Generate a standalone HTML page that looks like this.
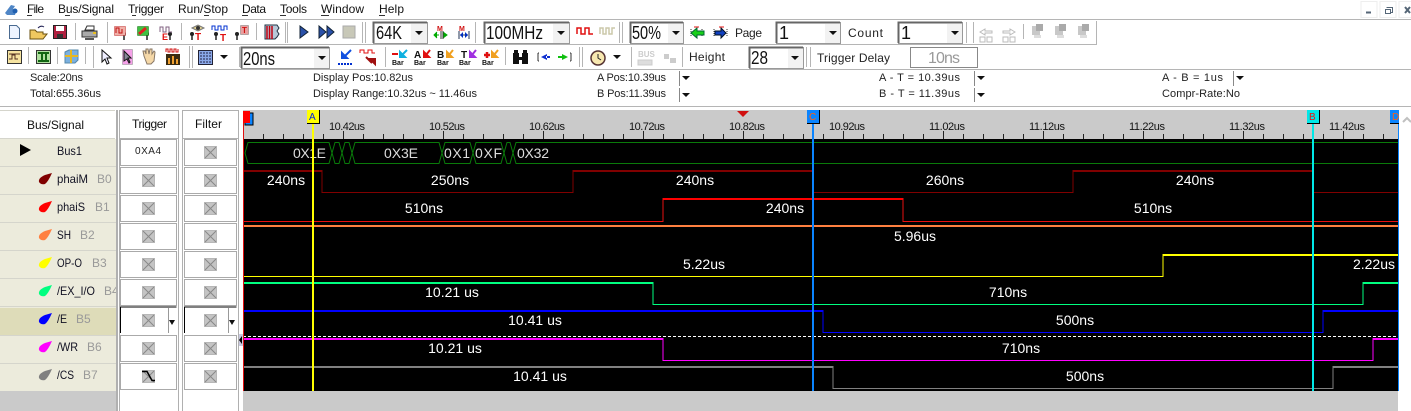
<!DOCTYPE html>
<html><head><meta charset="utf-8"><style>
html,body{margin:0;padding:0;background:#fff;width:1411px;height:411px;overflow:hidden}
svg{display:block;font-family:"Liberation Sans","IPAGothic",sans-serif}
.m{font-size:12px;fill:#111}
.i{font-size:11px;fill:#222}
.c{font-size:18px;fill:#111}
.t{font-size:12px;fill:#222}
.l{font-size:12px;fill:#112}
.g{font-size:12px;fill:#999}
.w{font-size:14px;fill:#fff;text-anchor:middle}
.b{font-size:14px;fill:#ddd}
.r{font-size:11px;fill:#111}
.k line,.k path,.k rect{shape-rendering:crispEdges}
</style></head><body>
<svg width="1411" height="411" viewBox="0 0 1411 411" xmlns="http://www.w3.org/2000/svg">
<defs>
<path id="ar" d="M-4 0h8l-4 4z" fill="#111"/>
<pattern id="tk" patternUnits="userSpaceOnUse" x="243" y="131" width="100" height="8">
<path d="M.5 0v8M20.5 3v5M40.5 3v5M60.5 3v5M80.5 3v5" stroke="#222" fill="none" shape-rendering="crispEdges"/>
</pattern>
<g id="xb"><rect width="13" height="13" fill="#c4c4c4"/><path d="M1 1l11 11M12 1L1 12" stroke="#888" fill="none"/><rect x=".5" y=".5" width="12" height="12" fill="none" stroke="#aaa" stroke-dasharray="1 1"/></g>
<g id="cell"><rect x="120.5" y=".5" width="56" height="26" fill="#fff" stroke="#aaa"/></g>
<g id="fcell"><rect x="184.5" y=".5" width="52" height="26" fill="#fff" stroke="#aaa"/></g>
<g id="bar"><text x="-8" y="10" font-size="7" font-weight="bold" fill="#111">Bar</text></g>
<g id="pc"><rect x="-6" y="-6" width="8" height="9" fill="#c8c8c8"/><rect x="-2" y="-8" width="7" height="7" fill="#aaa"/><rect x="-4" y="3" width="7" height="3" fill="#ddd"/></g>
</defs>

<!-- menu bar -->
<path d="M5 13l6-8 4 1-2 3 3 2-1 4H7z" fill="#4f86c6"/>
<circle cx="15" cy="11" r="2.5" fill="#2060b0"/>
<text class="m" x="27" y="13" textLength="17">File</text>
<text class="m" x="58" y="13" textLength="56">Bus/Signal</text>
<text class="m" x="128" y="13" textLength="36">Trigger</text>
<text class="m" x="178" y="13" textLength="50">Run/Stop</text>
<text class="m" x="242" y="13" textLength="24">Data</text>
<text class="m" x="280" y="13" textLength="27">Tools</text>
<text class="m" x="321" y="13" textLength="43">Window</text>
<text class="m" x="379" y="13" textLength="25">Help</text>
<path d="M27 15.500h5M65 15.500h5M132 15.500h4M204 15.500h5M242 15.500h6M280 15.500h6M321 15.500h8M379 15.500h6" stroke="#333" shape-rendering="crispEdges"/>

<!-- window buttons -->
<g class="k"><rect x="1361" y="1.500" width="16" height="16" fill="#fff" stroke="#eee"/><rect x="1380" y="1.500" width="16" height="16" fill="#fff" stroke="#eee"/><rect x="1399" y="1.500" width="14" height="16" fill="#fff" stroke="#eee"/>
<path d="M1366 12.500h5" stroke="#567" stroke-width="2"/><path d="M1386.500 7.500h6v5h-2M1385.500 9.500h5v4h-5z" stroke="#567" fill="none"/></g>
<path d="M1405 7l5 6M1410 7l-5 6" stroke="#567" stroke-width="2"/>

<!-- toolbar lines -->
<g class="k" stroke="#b5b5b5" fill="none">
<path d="M0 19.500H1411M0 69.500H1411M0 106.500H1411M0 44.500H1097" />
<path d="M75.500 23v17M107.500 22v21M181.500 23v17M256.500 23v17M285.500 22v21M287.500 22v21M362.500 22v21M365.500 22v21M475.500 22v21M619.500 22v21M622.500 22v21M966.500 22v21M973.500 22v21M1023.500 24v15M1096.500 21v23M28.500 47v17M57.500 47v17M85.500 47v17M93.500 46v22M189.500 46v22M192.500 46v22M239.500 47v20M385.500 47v20M505.500 47v18M579.500 47v20M582.500 47v20M631.500 47v20M682.500 47v20M806.500 47v20M810.500 47v20"/>
</g>

<!-- toolbar 1 icons -->
<path d="M9.500 25.500h7l3 3v10h-10z" fill="#eef4ff" stroke="#4a6a90"/>
<path d="M30 38v-8h5l2 2h6v2h4l-4 5H30z" fill="#f0c860" stroke="#6a5010"/><path d="M38 28q3-3 6-1" stroke="#225" fill="none"/>
<rect x="53.500" y="25.500" width="13" height="13" fill="#b02040" stroke="#222"/><rect x="56" y="26" width="8" height="5" fill="#fff"/><rect x="57" y="34" width="6" height="4" fill="#333"/>
<path d="M85 30l2-4h7v4z" fill="#fff" stroke="#333"/><path d="M82 31h15v6H82z" fill="#aaa" stroke="#333"/><rect x="85" y="38" width="9" height="2" fill="#555"/><rect x="93" y="32" width="3" height="2" fill="#e8c020"/>
<g stroke="#222" stroke-width="1.500" fill="none"><path d="M124 35v5M147 35v5M170 35v5M192 35v5M216 35v5M237 35v5" /></g>
<circle cx="124" cy="34" r="2" fill="#222"/><circle cx="147" cy="34" r="2" fill="#222"/><circle cx="170" cy="34" r="2" fill="#222"/><circle cx="192" cy="34" r="2" fill="#222"/><circle cx="216" cy="34" r="2" fill="#222"/><circle cx="237" cy="34" r="2" fill="#222"/>
<rect x="114.500" y="26.500" width="11" height="9" fill="#f0b0a8" stroke="#c03030" stroke-dasharray="1 1"/><path d="M116 33v-5h3v5h3v-4" stroke="#c01010" fill="none"/>
<rect x="137.500" y="26.500" width="11" height="9" fill="#40c040" stroke="#107010" stroke-dasharray="1 1"/><path d="M139 34l7-6" stroke="#e02020" stroke-width="3"/>
<path d="M160 32v-5h3v5h3v-5h3v5h3" stroke="#806080" fill="none"/><text x="162" y="40" font-size="9" font-weight="bold" fill="#e01010">E</text>
<path d="M192 28l6-3 6 3-6 3z" fill="#e0d090" stroke="#777"/><circle cx="198" cy="28" r="2" fill="#333"/><text x="195" y="40" font-size="10" font-weight="bold" fill="#e01010">T</text>
<path d="M212 30v-4h3v4h3v-4h3v4h3v-4h3v4" stroke="#0030d0" fill="none"/><text x="220" y="41" font-size="10" font-weight="bold" fill="#e01010">T</text>
<rect x="240.500" y="25.500" width="8" height="9" fill="#e8a0a0" stroke="#777" stroke-dasharray="1 1"/><text x="242" y="33" font-size="8" font-weight="bold" fill="#d01010">T</text>
<path d="M265 25h12l2 3-2 3 2 3-2 3-2 2h-10z" fill="#b8c8d8" stroke="#234"/><path d="M267 26v13M269.500 26v13M272 26v13" stroke="#c00010" stroke-width="1.500"/>
<path d="M300 26l8 6-8 6z" fill="#2a50a8" stroke="#123"/><path d="M319 26l7 6-7 6zM327 26l7 6-7 6z" fill="#2a50a8" stroke="#123"/>
<rect x="343" y="26" width="12" height="12" fill="#c8c8b8" stroke="#aaa"/>

<g class="k">
<rect x="373.500" y="22.500" width="54" height="21" fill="#fff" stroke="#999"/>
<rect x="411" y="24" width="16" height="19" fill="#f2f2f2"/>
<rect x="484.500" y="22.500" width="85" height="21" fill="#fff" stroke="#999"/>
<rect x="553" y="24" width="16" height="19" fill="#f2f2f2"/>
<rect x="630.500" y="22.500" width="53" height="21" fill="#fff" stroke="#999"/>
<rect x="668" y="24" width="15" height="19" fill="#f2f2f2"/>
<rect x="776.500" y="22.500" width="64" height="21" fill="#fff" stroke="#999"/>
<rect x="825" y="24" width="15" height="19" fill="#f2f2f2"/>
<rect x="898.500" y="22.500" width="64" height="21" fill="#fff" stroke="#999"/>
<rect x="947" y="24" width="15" height="19" fill="#f2f2f2"/>
<rect x="241.500" y="47.500" width="88" height="21" fill="#fff" stroke="#999"/>
<rect x="314" y="49" width="15" height="19" fill="#f2f2f2"/>
<rect x="749.500" y="47.500" width="54" height="21" fill="#fff" stroke="#999"/>
<rect x="788" y="49" width="15" height="19" fill="#f2f2f2"/>
<rect x="910.500" y="47.500" width="67" height="20" fill="#fff" stroke="#888"/>
<path d="M373.500 43V22.500H427M484.500 43V22.500H569M630.500 43V22.500H683M776.500 43V22.500H840M898.500 43V22.500H962M241.500 68V47.500H329M749.500 68V47.500H803" stroke="#666" stroke-width="2" fill="none"/>
</g>
<use href="#ar" x="419" y="31"/><use href="#ar" x="561" y="31"/><use href="#ar" x="676" y="31"/><use href="#ar" x="833" y="31"/><use href="#ar" x="955" y="31"/><use href="#ar" x="322" y="56"/><use href="#ar" x="795" y="56"/><use href="#ar" x="224" y="55"/><use href="#ar" x="617" y="55"/>
<text class="c" x="376" y="39" textLength="26" lengthAdjust="spacingAndGlyphs">64K</text>
<text class="c" x="486" y="39" textLength="57" lengthAdjust="spacingAndGlyphs">100MHz</text>
<text class="c" x="632" y="39" textLength="29" lengthAdjust="spacingAndGlyphs">50%</text>
<text class="c" x="779" y="39">1</text>
<text class="c" x="901" y="39">1</text>
<text class="c" x="243" y="65" textLength="32" lengthAdjust="spacingAndGlyphs">20ns</text>
<text class="c" x="751" y="64" textLength="17" lengthAdjust="spacingAndGlyphs">28</text>
<text x="928" y="63" font-size="16" fill="#999" textLength="32">10ns</text>

<text x="437" y="31" font-size="7" font-weight="bold" fill="#d01010">M</text><text x="459" y="31" font-size="7" font-weight="bold" fill="#d01010">M</text>
<path d="M434 35h5M437 32l-3 3 3 3M443 32l4 3-4 3" stroke="#0a0" fill="#0a0"/><path d="M441 31v8M443 31v8" stroke="#333"/>
<path d="M459 31v8M469 31v8M460 35h8" stroke="#235"/><path d="M463 32l-3 3 3 3zM465 32l3 3-3 3z" fill="#0030c0"/>
<path d="M577 34v-6h4v6h4v-6h4v6h4" stroke="#e01010" fill="none" stroke-width="1.500"/>
<path d="M600 34v-6h3v6h3v-6h3v6h3v-6h3" stroke="#ccc8aa" fill="none" stroke-width="1.500"/>
<path d="M691 29v8M702 29v8" stroke="#333" stroke-dasharray="1 1"/><path d="M697 28l-6 5 6 5v-3h7v-4h-7z" fill="#18d018" stroke="#063"/><path d="M694 27h5" stroke="#e01010"/>
<path d="M714 29v8M727 29v8" stroke="#333" stroke-dasharray="1 1"/><path d="M715 31h6v-3l5 5-5 5v-3h-6z" fill="#1040c0" stroke="#012"/><path d="M719 27h5" stroke="#e01010"/>
<text class="t" x="735" y="37" textLength="27">Page</text>
<text class="t" x="848" y="37" textLength="35">Count</text>

<!-- disabled icons -->
<path d="M980 32l5-3v2h7v2h-7v2zM980 37h5v5h-5zM987 37h5v5h-5z" fill="none" stroke="#bbb"/>
<path d="M1015 32l-5-3v2h-7v2h7v2zM1003 37h5v5h-5zM1010 37h5v5h-5z" fill="none" stroke="#bbb"/>
<use href="#pc" x="1038" y="32"/><use href="#pc" x="1061" y="32"/><use href="#pc" x="1084" y="32"/>

<!-- toolbar 2 icons -->
<g class="k"><rect x="7.500" y="50.500" width="14" height="13" fill="#f5e3a0" stroke="#333"/><rect x="36.500" y="50.500" width="14" height="13" fill="#b0e0a0" stroke="#333"/></g>
<path d="M9 59h3v-4h3v4h3M9 54h11" stroke="#532" fill="none"/>
<path d="M38 53h11M38 61h11M42 53v8M46 53v8" stroke="#161" stroke-width="2" fill="none"/>
<path d="M65 52l4-2h9v10l-3 3H65z" fill="#7ab0e0" stroke="#58a"/><path d="M65 56h13M71 50v13" stroke="#e8b820" stroke-width="2"/>
<path d="M102 50v12l3-3 2 5 2-1-2-5h4z" fill="#eef" stroke="#111"/>
<rect x="122.500" y="49.500" width="10" height="15" fill="#f4a0e8" stroke="#888" stroke-dasharray="1 1"/><path d="M124 51v10l3-2 2 4 1-1-2-4h3z" fill="#889" stroke="#111"/>
<path d="M144 56l-1-5 2 0 1 3 0-5 2 0 1 5 1-5 2 0 0 5 2-3 1 1-1 9-3 3h-4z" fill="#f5d8a8" stroke="#876"/>
<rect x="166" y="54" width="14" height="11" fill="#3a2a10"/><path d="M168 64v-6h2v6zM172 64v-8h2v8zM176 64v-5h2v5z" fill="#f0a030"/><path d="M166 52v-3h2v3h2v-3h2v3h2v-3h2v3h2v-3" stroke="#d01010" fill="none"/>
<rect x="198.500" y="50.500" width="14" height="14" fill="#8aa8e8" stroke="#223"/><path d="M200 53h11M200 56h11M200 59h11M200 62h11" stroke="#224" stroke-dasharray="2 1"/>
<path d="M338 64h14" stroke="#0030d0" stroke-dasharray="2 1" stroke-width="2"/><path d="M351 50l-6 6M342 53v5h5z" stroke="#1050e0" fill="#1050e0" stroke-width="2"/>
<path d="M360 53v-3h4v3h4v-3h4v3h3" stroke="#e01010" fill="none"/><path d="M366 57l6 6M375 64v-5h-5z" stroke="#a01010" fill="#a01010" stroke-width="2"/>
<rect x="392" y="53" width="6" height="2" fill="#e01010"/><path d="M407 50l-5 5M400 52v5h5z" stroke="#10b0e0" fill="#10b0e0" stroke-width="2"/>
<text x="414" y="58" font-size="10" font-weight="bold" fill="#111">A</text><path d="M430 50l-4 5M424 52v5h5z" stroke="#e01010" fill="#e01010" stroke-width="2"/>
<text x="437" y="58" font-size="10" font-weight="bold" fill="#111">B</text><path d="M453 50l-4 5M447 52v5h5z" stroke="#f0a020" fill="#f0a020" stroke-width="2"/>
<text x="461" y="58" font-size="10" font-weight="bold" fill="#111">T</text><path d="M476 50l-4 5M470 52v5h5z" stroke="#a030e0" fill="#a030e0" stroke-width="2"/>
<path d="M487 52v6M484 55h6" stroke="#e01010" stroke-width="2.500"/><path d="M498 50l-4 5M492 52v5h5z" stroke="#f0a020" fill="#f0a020" stroke-width="2"/>
<use href="#bar" x="400" y="55"/><use href="#bar" x="422" y="55"/><use href="#bar" x="445" y="55"/><use href="#bar" x="467" y="55"/><use href="#bar" x="490" y="55"/>
<path d="M513 53h6v4h3v-4h6v11h-6v-4h-3v4h-6z" fill="#111"/><path d="M514 50h4v3h-4zM523 50h4v3h-4z" fill="#111"/>
<path d="M538 53v8M538 53h1M538 61h1" stroke="#333" fill="none"/><path d="M547 54l-6 3 6 3z M546 56h4v2h-4z" fill="#1030d0"/>
<path d="M571 53v8M571 53h-1M571 61h-1" stroke="#333" fill="none"/><path d="M562 54l6 3-6 3z M558 56h5v2h-5z" fill="#10c010"/>
<circle cx="598" cy="58" r="7" fill="#f8e8b0" stroke="#533" stroke-width="1.500"/><path d="M598 54v4l3 2" stroke="#222" fill="none"/>
<rect x="638" y="60" width="14" height="5" fill="#ddd" stroke="#ccc"/><text x="638" y="57" font-size="8" font-weight="bold" fill="#ccc">BUS</text>
<path d="M664 54h5v5h-5zM670 58h6v5h-6z" fill="#ccc"/>
<text class="t" x="689" y="61" textLength="36">Height</text>
<text class="t" x="817" y="62" textLength="73">Trigger Delay</text>

<!-- info rows -->
<g class="i">
<text x="30" y="81" textLength="53">Scale:20ns</text>
<text x="30" y="97" textLength="71">Total:655.36us</text>
<text x="313" y="81" textLength="100">Display Pos:10.82us</text>
<text x="313" y="97" textLength="164">Display Range:10.32us ~ 11.46us</text>
<text x="597" y="81" textLength="69">A Pos:10.39us</text>
<text x="597" y="97" textLength="69">B Pos:11.39us</text>
<text x="879" y="81" textLength="81">A - T = 10.39us</text>
<text x="879" y="97" textLength="81">B - T = 11.39us</text>
<text x="1162" y="81" textLength="61">A - B = 1us</text>
<text x="1162" y="97" textLength="78">Compr-Rate:No</text>
</g>
<path class="k" d="M679.500 71v15M679.500 88v14M974.500 71v15M974.500 88v14M1233.500 71v15" stroke="#888" shape-rendering="crispEdges"/>
<use href="#ar" x="686" y="76"/><use href="#ar" x="686" y="93"/><use href="#ar" x="981" y="76"/><use href="#ar" x="981" y="93"/><use href="#ar" x="1240" y="76"/>

<!-- left panel -->
<g class="k">
<rect x="0" y="110" width="116" height="29" fill="#fff"/>
<rect x="0" y="139" width="116" height="252" fill="#ecebdc"/>
<rect x="0" y="308" width="116" height="28" fill="#dedcb9"/>
<rect x="0" y="391" width="116" height="20" fill="#cacaca"/>
<path d="M0 110.500H115M0 138.500H115M0 166.500H116M0 194.500H116M0 222.500H116M0 250.500H116M0 278.500H116M0 306.500H116M0 335.500H116M0 363.500H116" stroke="#d5d5cc"/>
<path d="M119.500 110v301M178.500 110v301M182.500 110v301M238.500 110v301" stroke="#b0b0b0"/>
<path d="M119 110.500h60M119 138.500h60M182 110.500h57M182 138.500h57" stroke="#b0b0b0"/>
</g>
<text class="m" x="27" y="129" textLength="57">Bus/Signal</text>
<text class="m" x="132" y="128" textLength="35">Trigger</text>
<text class="m" x="195" y="128" textLength="27">Filter</text>

<path d="M20 144l11 6-11 6z" fill="#000"/>
<text class="l" x="57" y="155" textLength="25" lengthAdjust="spacingAndGlyphs">Bus1</text>

<path d="M52 173l-7 2q-7 3-6 7 2 3 6 2 3-2 7-11z" fill="#800000"/>
<path d="M52 201l-7 2q-7 3-6 7 2 3 6 2 3-2 7-11z" fill="#ff0000"/>
<path d="M52 229l-7 2q-7 3-6 7 2 3 6 2 3-2 7-11z" fill="#ff8040"/>
<path d="M52 257l-7 2q-7 3-6 7 2 3 6 2 3-2 7-11z" fill="#ffff00"/>
<path d="M52 285l-7 2q-7 3-6 7 2 3 6 2 3-2 7-11z" fill="#00ff80"/>
<path d="M52 313l-7 2q-7 3-6 7 2 3 6 2 3-2 7-11z" fill="#0000ff"/>
<path d="M52 341l-7 2q-7 3-6 7 2 3 6 2 3-2 7-11z" fill="#ff00ff"/>
<path d="M52 369l-7 2q-7 3-6 7 2 3 6 2 3-2 7-11z" fill="#808080"/>

<text class="l" x="57" y="183" textLength="31" lengthAdjust="spacingAndGlyphs">phaiM</text><text class="g" x="97" y="183">B0</text>
<text class="l" x="57" y="211" textLength="28" lengthAdjust="spacingAndGlyphs">phaiS</text><text class="g" x="95" y="211">B1</text>
<text class="l" x="57" y="239" textLength="14" lengthAdjust="spacingAndGlyphs">SH</text><text class="g" x="80" y="239">B2</text>
<text class="l" x="57" y="267" textLength="25" lengthAdjust="spacingAndGlyphs">OP-O</text><text class="g" x="92" y="267">B3</text>
<text class="l" x="57" y="295" textLength="38" lengthAdjust="spacingAndGlyphs">/EX_I/O</text><text class="g" x="104" y="295">B4</text>
<text class="l" x="57" y="323" textLength="10" lengthAdjust="spacingAndGlyphs">/E</text><text class="g" x="76" y="323">B5</text>
<text class="l" x="57" y="351" textLength="21" lengthAdjust="spacingAndGlyphs">/WR</text><text class="g" x="87" y="351">B6</text>
<text class="l" x="57" y="379" textLength="17" lengthAdjust="spacingAndGlyphs">/CS</text><text class="g" x="83" y="379">B7</text>
<rect x="116" y="110" width="3" height="301" fill="#fff"/>
<rect x="116" y="110" width="2" height="301" fill="#b0b0b0" shape-rendering="crispEdges"/>

<!-- trigger / filter cells -->
<g class="k">
<use href="#cell" y="139"/><use href="#cell" y="167"/><use href="#cell" y="195"/><use href="#cell" y="223"/><use href="#cell" y="251"/><use href="#cell" y="279"/><use href="#cell" y="335"/><use href="#cell" y="363"/>
<use href="#fcell" y="139"/><use href="#fcell" y="167"/><use href="#fcell" y="195"/><use href="#fcell" y="223"/><use href="#fcell" y="251"/><use href="#fcell" y="279"/><use href="#fcell" y="335"/><use href="#fcell" y="363"/>
<rect x="120" y="307" width="57" height="27" fill="#fff"/><rect x="184" y="307" width="53" height="27" fill="#fff"/>
<path d="M120.500 333v-26h56M184.500 333v-26h52" stroke="#000" fill="none"/>
<path d="M168.500 308v25M228.500 308v25" stroke="#999"/>
</g>
<path d="M169 320h6l-3 5zM229 320h6l-3 5z" fill="#111"/>
<text x="135" y="154" font-size="10" fill="#222" textLength="26">0XA4</text>
<use href="#xb" x="204" y="146"/>
<use href="#xb" x="142" y="174"/><use href="#xb" x="204" y="174"/>
<use href="#xb" x="142" y="202"/><use href="#xb" x="204" y="202"/>
<use href="#xb" x="142" y="230"/><use href="#xb" x="204" y="230"/>
<use href="#xb" x="142" y="258"/><use href="#xb" x="204" y="258"/>
<use href="#xb" x="142" y="286"/><use href="#xb" x="204" y="286"/>
<use href="#xb" x="142" y="314"/><use href="#xb" x="204" y="314"/>
<use href="#xb" x="142" y="342"/><use href="#xb" x="204" y="342"/>
<use href="#xb" x="142" y="370"/><use href="#xb" x="204" y="370"/>
<path d="M142 371.500h5l5 9h3" stroke="#000" fill="none" stroke-width="1.500"/>

<!-- ruler -->
<g class="k">
<rect x="243" y="110" width="1155" height="29" fill="#cacaca"/>
<rect x="243" y="131" width="1155" height="8" fill="url(#tk)"/>
<rect x="243" y="139" width="1155" height="252" fill="#000"/>
<rect x="243" y="391" width="1155" height="20" fill="#cacaca"/>
<rect x="239" y="334" width="4" height="12" fill="#c8c8e0"/>
</g>
<path d="M242 336l-3 4 3 4z" fill="#000"/>
<g class="r">
<text x="329" y="130" textLength="36">10.42us</text><text x="429" y="130" textLength="36">10.52us</text><text x="529" y="130" textLength="36">10.62us</text><text x="629" y="130" textLength="36">10.72us</text><text x="729" y="130" textLength="36">10.82us</text><text x="829" y="130" textLength="36">10.92us</text><text x="929" y="130" textLength="36">11.02us</text><text x="1029" y="130" textLength="36">11.12us</text><text x="1129" y="130" textLength="36">11.22us</text><text x="1229" y="130" textLength="36">11.32us</text><text x="1329" y="130" textLength="36">11.42us</text>
</g>
<path d="M737 111h12l-6 6z" fill="#d01010"/>

<!-- waves -->
<g fill="none" stroke="#0a7a0a" stroke-width="1">
<path d="M245 153L248 142.500H329L332 153L335 142.500H339L342 153L345 142.500H349L352 153L355 142.500H439L442 153L445 142.500H470L473 153L476 142.500H501L504 153L507 142.500H510L513 153L516 142.500H1398"/>
<path d="M245 153L248 163.500H329L332 153L335 163.500H339L342 153L345 163.500H349L352 153L355 163.500H439L442 153L445 163.500H470L473 153L476 163.500H501L504 153L507 163.500H510L513 153L516 163.500H1398"/>
</g>
<g class="k" fill="none">
<path d="M243 171H322M573 171H813M1073 171H1313" stroke="#800000" stroke-width="2"/>
<path d="M322 170V192.500H573V170M813 170V192.500H1073V170M1313 192.500H1398" stroke="#800000"/>
<path d="M663 199H903" stroke="#ff0000" stroke-width="2"/>
<path d="M243 221.500H663V198M903 198V221.500H1398" stroke="#e81010"/>
<path d="M243 226H1398" stroke="#ff8040" stroke-width="2"/>
<path d="M243 276.500H1163V254" stroke="#ffff00"/>
<path d="M1163 255H1398" stroke="#ffff00" stroke-width="2"/>
<path d="M243 283H653M1363 283H1398" stroke="#00ff80" stroke-width="2"/>
<path d="M653 282V304.500H1363V282" stroke="#00ff80"/>
<path d="M243 311H823M1323 311H1398" stroke="#0000ff" stroke-width="2"/>
<path d="M823 310V332.500H1323V310" stroke="#0000ff"/>
<path d="M243 336.500H1398" stroke="#fff" stroke-dasharray="3 2"/>
<path d="M243 339H663M1373 339H1398" stroke="#ff00ff" stroke-width="2"/>
<path d="M663 338V360.500H1373V338" stroke="#ff00ff"/>
<path d="M243 367H833M1333 367H1398" stroke="#808080" stroke-width="2"/>
<path d="M833 366V388.500H1333V366" stroke="#808080"/>
</g>

<!-- wave text -->
<text class="b" x="293" y="158" textLength="33">0X1E</text>
<text class="b" x="384" y="158" textLength="34">0X3E</text>
<text class="b" x="444" y="158" textLength="26">0X1</text>
<text class="b" x="475" y="158" textLength="27">0XF</text>
<text class="b" x="517" y="158" textLength="32">0X32</text>
<g class="w">
<text x="286" y="185">240ns</text><text x="450" y="185">250ns</text><text x="695" y="185">240ns</text><text x="945" y="185">260ns</text><text x="1195" y="185">240ns</text>
<text x="424" y="213">510ns</text><text x="785" y="213">240ns</text><text x="1153" y="213">510ns</text>
<text x="915" y="241">5.96us</text>
<text x="704" y="269">5.22us</text><text x="1374" y="269">2.22us</text>
<text x="452" y="297">10.21 us</text><text x="1008" y="297">710ns</text>
<text x="535" y="325">10.41 us</text><text x="1075" y="325">500ns</text>
<text x="455" y="353">10.21 us</text><text x="1021" y="353">710ns</text>
<text x="540" y="381">10.41 us</text><text x="1085" y="381">500ns</text>
</g>

<!-- cursors -->
<g class="k">
<rect x="243" y="112" width="1" height="279" fill="#e01010"/>
<rect x="312" y="122" width="2" height="269" fill="#ffff00"/>
<rect x="812" y="122" width="2" height="269" fill="#0a84ff"/>
<rect x="1312" y="122" width="2" height="269" fill="#00e8e8"/>
<rect x="1398" y="122" width="1" height="269" fill="#0a84ff"/>
<rect x="245" y="113" width="8" height="12" fill="#0a84ff" stroke="#000"/>
<rect x="243" y="111" width="7" height="12" fill="#ff0000"/>
<rect x="307" y="110" width="12" height="13" fill="#ffff00"/>
<rect x="807" y="110" width="12" height="13" fill="#0a84ff"/>
<rect x="1307" y="110" width="12" height="13" fill="#00e8e8"/>
<rect x="1390" y="110" width="9" height="13" fill="#0a84ff"/>
<path d="M319.500 110v13M819.500 110v13M1319.500 110v13M307 123.500h13M807 123.500h13M1307 123.500h13M1390 123.500h9" stroke="#000"/>
</g>
<text x="309" y="120" font-size="10" fill="#0020e0">A</text>
<text x="809" y="120" font-size="10" fill="#ff6010">C</text>
<text x="1309" y="120" font-size="10" fill="#f01010">B</text>
<text x="1392" y="120" font-size="10" fill="#ff6010">D</text>
<path d="M1403 122l4-4 4 4" stroke="#c0c0c0" fill="none" stroke-width="2"/>
</svg>
</body></html>
